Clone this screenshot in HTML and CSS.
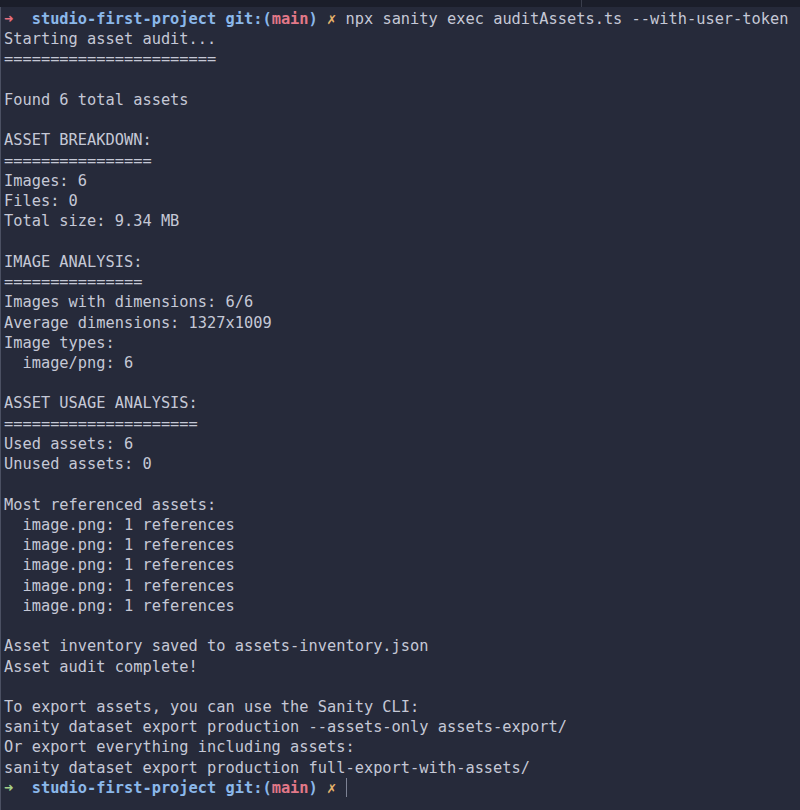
FILE: index.html
```html
<!DOCTYPE html>
<html>
<head>
<meta charset="utf-8">
<link rel="stylesheet" href="styles.css">
</head>
<body>
<div class="topbar"><div class="tab"></div><div class="tab-rest"></div></div>
<div class="term"><pre class="out"><span class="arrow red">➜</span>  <span class="dir">studio-first-project</span> <span class="git">git:(</span><span class="branch">main</span><span class="git">)</span> <span class="dirty">✗</span> npx sanity exec auditAssets.ts --with-user-token
Starting asset audit...
=======================

Found 6 total assets

ASSET BREAKDOWN:
================
Images: 6
Files: 0
Total size: 9.34 MB

IMAGE ANALYSIS:
===============
Images with dimensions: 6/6
Average dimensions: 1327x1009
Image types:
  image/png: 6

ASSET USAGE ANALYSIS:
=====================
Used assets: 6
Unused assets: 0

Most referenced assets:
  image.png: 1 references
  image.png: 1 references
  image.png: 1 references
  image.png: 1 references
  image.png: 1 references

Asset inventory saved to assets-inventory.json
Asset audit complete!

To export assets, you can use the Sanity CLI:
sanity dataset export production --assets-only assets-export/
Or export everything including assets:
sanity dataset export production full-export-with-assets/
<span class="arrow green">➜</span>  <span class="dir">studio-first-project</span> <span class="git">git:(</span><span class="branch">main</span><span class="git">)</span> <span class="dirty">✗</span> <span class="cursor"></span></pre></div>
</body>
</html>
```

FILE: styles.css
```css
html, body {
  margin: 0;
  padding: 0;
  background: #262a3a;
  height: 100%;
  overflow: hidden;
}

.topbar {
  display: flex;
  height: 7px;
  background: #1b1e2a;
}

.tab {
  width: 581px;
  border-right: 1px solid #3a3e4c;
}

.tab-rest {
  flex: 1;
}

.term {
  border-left: 1px solid #4b5062;
  padding: 2px 0 0 3px;
  height: 803px;
  box-sizing: border-box;
}

.out {
  margin: 0;
  font-family: "DejaVu Sans Mono", "Liberation Mono", monospace;
  font-size: 15.33px;
  line-height: 20.24px;
  color: #c5c8d6;
  white-space: pre;
}

.arrow {
  display: inline-block;
  width: 1ch;
  text-align: center;
  font-weight: bold;
}

.red { color: #e8707e; }
.green { color: #a6d189; }

.dir {
  color: #8bb8ea;
  font-weight: bold;
}

.git {
  color: #8bb8ea;
  font-weight: bold;
}

.branch {
  color: #e27888;
  font-weight: bold;
}

.dirty {
  display: inline-block;
  width: 1ch;
  text-align: center;
  color: #e6b36b;
  font-weight: bold;
}

.cursor {
  display: inline-block;
  width: 1px;
  height: 19px;
  background: #7d8294;
  vertical-align: -4px;
}
```
